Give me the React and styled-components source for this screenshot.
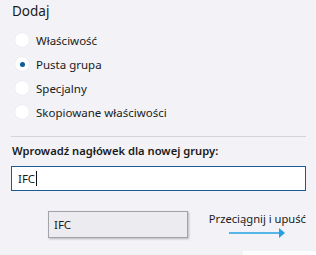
import React from "react";
import styled, { createGlobalStyle } from "styled-components";

const Global = createGlobalStyle`
  html, body {
    margin: 0;
    padding: 0;
    background: #f2f2f7;
    overflow: hidden;
  }
  body {
    font-family: "Noto Sans", "Open Sans", sans-serif;
    color: #1a1a1a;
  }
`;

const Page = styled.div`
  width: 316px;
  height: 255px;
  box-sizing: border-box;
  padding: 0 10px 0 11px;
  display: flex;
  flex-direction: column;
`;

const Heading = styled.div`
  font-size: 13.5px;
  line-height: 18px;
  margin-top: 2px;
  padding-left: 1px;
  color: #1a1a1a;
`;

const RadioList = styled.div`
  display: flex;
  flex-direction: column;
  margin-top: 8px;
`;

const RadioRow = styled.label`
  display: flex;
  align-items: center;
  height: 24px;
  gap: 7px;
  padding-left: 4px;
  font-size: 11.5px;
  color: #1a1a1a;
`;

const RadioCircle = styled.span`
  width: 14px;
  height: 14px;
  border-radius: 50%;
  background: #ffffff;
  box-shadow: 0 0 0 0.5px #e8e8ee;
  display: flex;
  align-items: center;
  justify-content: center;
  &::after {
    content: "";
    width: 5px;
    height: 5px;
    border-radius: 50%;
    background: ${(p) => (p.checked ? "#0b5a9c" : "transparent")};
  }
`;

const Divider = styled.div`
  height: 1px;
  background: #d4d4da;
  margin-top: 12px;
`;

const FieldLabel = styled.div`
  font-size: 11.2px;
  font-weight: 600;
  line-height: 16px;
  margin-top: 6px;
  padding-left: 1px;
  color: #1a1a1a;
`;

const Input = styled.div`
  margin-top: 7px;
  height: 25px;
  box-sizing: border-box;
  border: 1px solid #1d5a94;
  background: #ffffff;
  display: flex;
  align-items: center;
  padding-left: 6px;
  font-size: 11.5px;
  color: #1a1a1a;
`;

const Caret = styled.span`
  width: 1px;
  height: 15px;
  background: #111;
  margin-left: 1px;
`;

const DragRow = styled.div`
  display: flex;
  align-items: flex-start;
  margin-top: 20px;
`;

const DragBox = styled.div`
  margin-left: 37px;
  width: 140px;
  height: 27px;
  box-sizing: border-box;
  border: 1px solid #a3a3aa;
  background: #ebebf0;
  box-shadow: 1px 1px 2px rgba(0, 0, 0, 0.25);
  display: flex;
  align-items: center;
  padding-left: 5px;
  font-size: 11.5px;
  color: #1a1a1a;
`;

const Hint = styled.div`
  margin-left: auto;
  display: flex;
  flex-direction: column;
  align-items: flex-end;
  font-size: 11.2px;
  line-height: 16px;
  color: #1a1a1a;
`;

const ArrowWrap = styled.div`
  margin-top: 1px;
  margin-right: 21px;
  height: 11px;
  display: flex;
`;

const Footer = styled.div`
  display: flex;
  justify-content: flex-end;
  margin-top: auto;
  margin-right: -10px;
`;

const FooterBlock = styled.div`
  width: 73px;
  height: 4px;
  background: #ffffff;
`;

function Arrow() {
  return (
    <svg width="56" height="11" viewBox="0 0 56 11">
      <rect x="0" y="4" width="51" height="2" fill="#56b6e8" />
      <polygon points="50,0 56,5 50,10" fill="#2a9fe0" />
    </svg>
  );
}

const options = [
  { label: "Właściwość", checked: false },
  { label: "Pusta grupa", checked: true },
  { label: "Specjalny", checked: false },
  { label: "Skopiowane właściwości", checked: false },
];

export default function App() {
  return (
    <>
      <Global />
      <Page>
        <Heading>Dodaj</Heading>
        <RadioList>
          {options.map((o) => (
            <RadioRow key={o.label}>
              <RadioCircle checked={o.checked} />
              {o.label}
            </RadioRow>
          ))}
        </RadioList>
        <Divider />
        <FieldLabel>Wprowadź nagłówek dla nowej grupy:</FieldLabel>
        <Input>
          IFC
          <Caret />
        </Input>
        <DragRow>
          <DragBox>IFC</DragBox>
          <Hint>
            Przeciągnij i upuść
            <ArrowWrap>
              <Arrow />
            </ArrowWrap>
          </Hint>
        </DragRow>
        <Footer>
          <FooterBlock />
        </Footer>
      </Page>
    </>
  );
}
